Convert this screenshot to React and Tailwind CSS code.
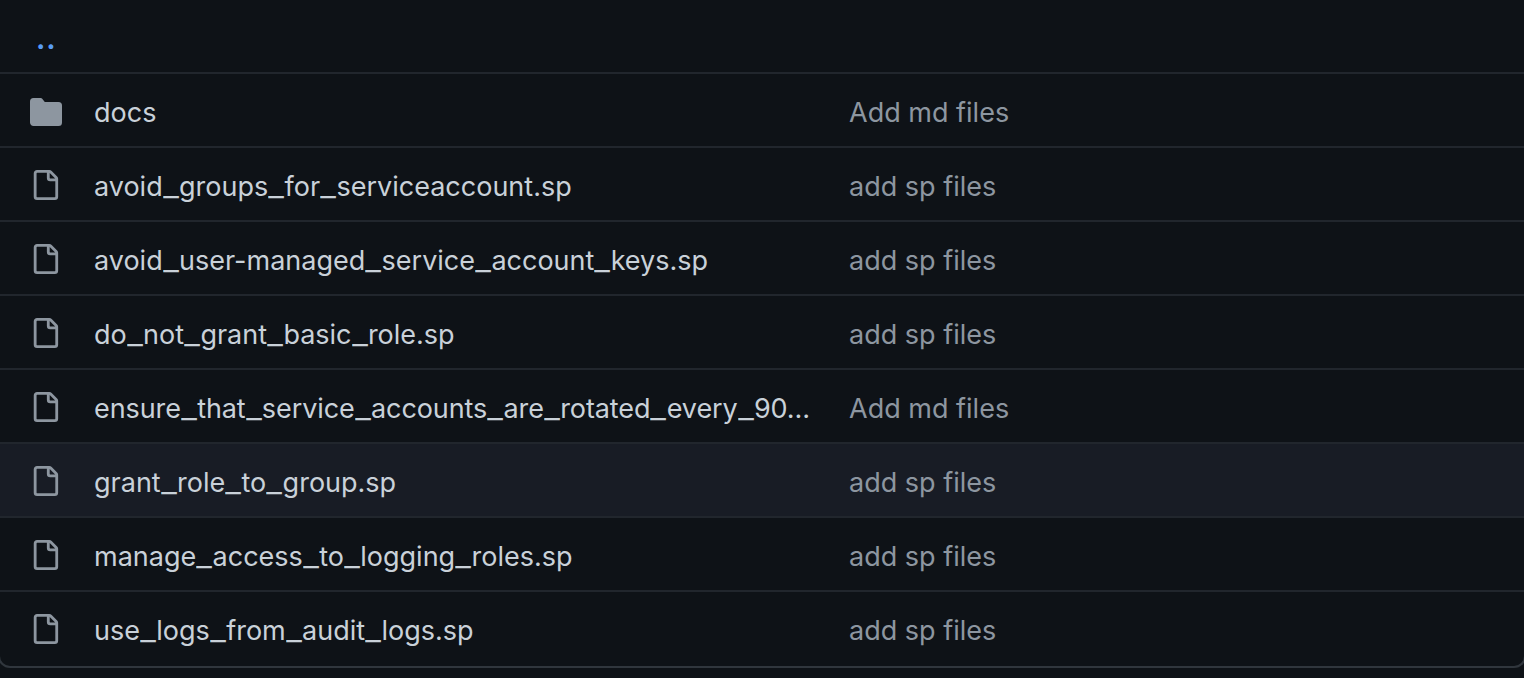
const rows = [
  { name: "docs", msg: "Add md files", dir: true },
  { name: "avoid_groups_for_serviceaccount.sp", msg: "add sp files" },
  { name: "avoid_user-managed_service_account_keys.sp", msg: "add sp files" },
  { name: "do_not_grant_basic_role.sp", msg: "add sp files" },
  { name: "ensure_that_service_accounts_are_rotated_every_90…", msg: "Add md files", tight: true },
  { name: "grant_role_to_group.sp", msg: "add sp files", hover: true },
  { name: "manage_access_to_logging_roles.sp", msg: "add sp files" },
  { name: "use_logs_from_audit_logs.sp", msg: "add sp files" },
];

function FolderIcon() {
  return (
    <svg viewBox="0 0 16 16" className="w-8 h-8 shrink-0 fill-[#8d96a0]">
      <path d="M1.75 1A1.75 1.75 0 0 0 0 2.75v10.5C0 14.216.784 15 1.75 15h12.5A1.75 1.75 0 0 0 16 13.25v-8.5A1.75 1.75 0 0 0 14.25 3H7.5a.25.25 0 0 1-.2-.1l-.9-1.2C6.07 1.26 5.55 1 5 1H1.75Z" />
    </svg>
  );
}

function FileIcon() {
  return (
    <svg viewBox="0 0 16 16" className="w-[30px] h-[30px] mr-[2px] mb-[2px] shrink-0 fill-[#8d96a0]">
      <path d="M2 1.75C2 .784 2.784 0 3.75 0h6.586c.464 0 .909.184 1.237.513l2.914 2.914c.329.328.513.773.513 1.237v9.586A1.75 1.75 0 0 1 13.25 16h-9.5A1.75 1.75 0 0 1 2 14.25Zm1.75-.25a.25.25 0 0 0-.25.25v12.5c0 .138.112.25.25.25h9.5a.25.25 0 0 0 .25-.25V6h-2.75A1.75 1.75 0 0 1 9 4.25V1.5Zm6.75.062V4.25c0 .138.112.25.25.25h2.688l-.011-.013-2.914-2.914-.013-.011Z" />
    </svg>
  );
}

// underscores run wider in the reference font
function FileName({ name }) {
  const parts = name.split("_");
  return parts.map((p, i) => (
    <span key={i}>
      {p}
      {i < parts.length - 1 && <span className="inline-block mx-[2px] scale-x-[1.27]">_</span>}
    </span>
  ));
}

export default function App() {
  return (
    <div className="w-[1524px] h-[678px] overflow-hidden bg-[#0e1217] font-['Inter',sans-serif]">
      <div className="h-[72px] flex items-center pl-[36px] pt-[6px]">
        <span className="text-[28px] leading-none font-bold text-[#589cf5] tracking-[1px]">..</span>
      </div>
      <div className="-mx-[2px] border-2 border-t-0 border-[#30363d] rounded-b-[12px]">
        {rows.map((r) => (
          <div
            key={r.name}
            className={`h-[74px] last:h-[76px] last:pb-[2px] flex items-center pl-[30px] pt-[4px] border-t-2 border-[#21262d] ${r.hover ? "bg-[#181c25]" : ""}`}
          >
            {r.dir ? <FolderIcon /> : <FileIcon />}
            <div className={`w-[716px] ml-[32px] mr-[39px] mt-[2px] whitespace-nowrap text-[27px] text-[#c9d1d9] ${r.tight ? "tracking-[-0.08px]" : ""}`}>
              <FileName name={r.name} />
            </div>
            <div className="mt-[2px] text-[27px] text-[#8d96a0]">{r.msg}</div>
          </div>
        ))}
      </div>
    </div>
  );
}
